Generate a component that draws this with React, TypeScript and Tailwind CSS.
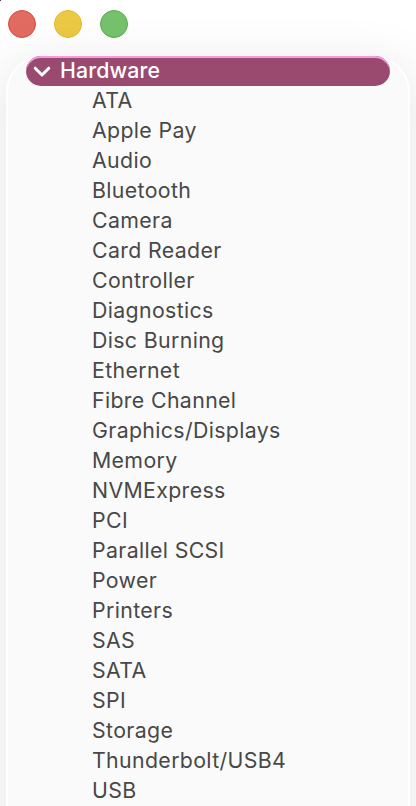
import { clsx } from "clsx";

const devices = [
  "ATA",
  "Apple Pay",
  "Audio",
  "Bluetooth",
  "Camera",
  "Card Reader",
  "Controller",
  "Diagnostics",
  "Disc Burning",
  "Ethernet",
  "Fibre Channel",
  "Graphics/Displays",
  "Memory",
  "NVMExpress",
  "PCI",
  "Parallel SCSI",
  "Power",
  "Printers",
  "SAS",
  "SATA",
  "SPI",
  "Storage",
  "Thunderbolt/USB4",
  "USB",
];

const lights = [
  { label: "Close", color: "border-[#dc4a42] bg-[#e26b61]" },
  { label: "Minimize", color: "border-[#e6b926] bg-[#ebc945]" },
  { label: "Zoom", color: "border-[#52ae4a] bg-[#76c26c]" },
];

function TitleBar() {
  return (
    <div className="flex h-14 shrink-0 items-start gap-[18px] pt-[10px] pl-2">
      {lights.map((light) => (
        <button
          key={light.label}
          aria-label={light.label}
          className={clsx("size-7 rounded-full border", light.color)}
        />
      ))}
    </div>
  );
}

export default function App() {
  return (
    <div className="relative flex h-[806px] w-[416px] flex-col overflow-hidden bg-white font-['Inter',sans-serif] text-[21.3px] leading-[30px]">
      {/* window corner showing the desktop */}
      <span className="absolute top-0 left-0 size-px bg-[#444444]" />
      <TitleBar />
      <nav className="mx-1.5 h-[850px] shrink-0 rounded-t-[36px] bg-[#fafafa] px-5 shadow-[inset_0_0_0_2px_#ffffff,0_12px_50px_8px_rgba(0,0,0,0.085)]">
        <div className="flex h-[30px] items-center rounded-full bg-[#9a4a6e] pl-[7px] text-white shadow-[inset_0_2px_0_#f59ddb]">
          <svg width="18" height="12" viewBox="0 0 18 12" fill="none" className="mt-0.5 shrink-0">
            <path
              d="M2.2 2.2 9 9l6.8-6.8"
              stroke="currentColor"
              strokeWidth="3"
              strokeLinecap="round"
              strokeLinejoin="round"
            />
          </svg>
          <span className="ml-[9px] pb-0.5 font-medium tracking-[0.15px]">Hardware</span>
        </div>
        <ul className="-mt-px pl-[66px] tracking-[0.36px] text-[#484848]">
          {devices.map((name) => (
            <li key={name} className="h-[30px] whitespace-nowrap">
              {name}
            </li>
          ))}
        </ul>
      </nav>
    </div>
  );
}
